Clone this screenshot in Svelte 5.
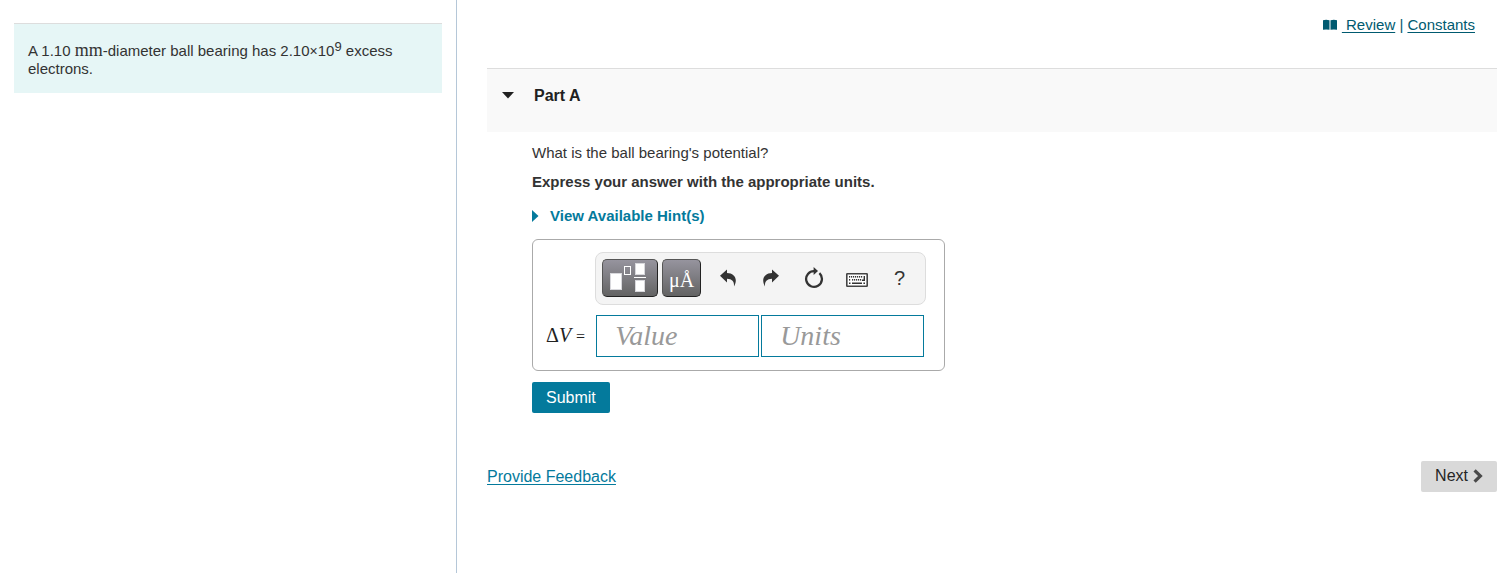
<script lang="ts">
  let hintsOpen = $state(false);
  let value = $state('');
  let units = $state('');
  const keyRows = [
    { y: 4, xs: [3, 5, 7, 9, 11, 13, 15] },
    { y: 7, xs: [3, 6, 8, 10, 12, 14] },
  ];
</script>

<div class="page">
  <aside class="side">
    <p class="problem">
      A 1.10 <span class="unit">mm</span>-diameter ball bearing has 2.10<span class="times">×</span>10<sup>9</sup> excess electrons.
    </p>
  </aside>

  <main class="main">
    <nav class="resources" aria-label="Resources">
      <svg width="16" height="12" viewBox="0 0 16 12" aria-hidden="true">
        <path d="M1 1.2Q4 .2 7.5 1.2V10.8Q4 10 1 10.8ZM8.5 1.2Q12 .2 15 1.2V10.8Q12 10 8.5 10.8Z" fill="#005a70" />
      </svg>
      <span class="links"><a href="#review">&nbsp;Review</a> | <a href="#constants">Constants</a></span>
    </nav>

    <header class="part">
      <button class="toggle" type="button" aria-label="Collapse Part A">
        <svg width="12" height="7" viewBox="0 0 12 7" aria-hidden="true"><path d="M0 0H12L6 6.5Z" fill="#212121" /></svg>
      </button>
      <h1>Part A</h1>
    </header>

    <section class="body">
      <p>What is the ball bearing's potential?</p>
      <p class="strong">Express your answer with the appropriate units.</p>
      <button class="hints" type="button" aria-expanded={hintsOpen} onclick={() => (hintsOpen = !hintsOpen)}>
        <svg width="7" height="12" viewBox="0 0 7 12" aria-hidden="true"><path d="M0 0L6.5 6L0 12Z" fill="#047a9c" /></svg>
        View Available Hint(s)
      </button>

      <div class="editor">
        <div class="toolbar" role="toolbar" aria-label="Equation tools">
          <button class="dark templates" type="button" aria-label="Templates">
            <svg width="36" height="30" viewBox="0 0 36 30" aria-hidden="true">
              <g fill="#fff" stroke="#d8d8dc" stroke-width="1">
                <rect x=".5" y="11.5" width="11" height="16" />
                <rect x="25.5" y="1.5" width="9" height="11" />
                <rect x="25.5" y="18.5" width="9" height="11" />
              </g>
              <rect x="14.5" y="4.5" width="6" height="8" fill="none" stroke="#fff" />
              <path d="M24 15.5H36" stroke="#fff" />
            </svg>
          </button>
          <button class="dark symbols" type="button" aria-label="Symbols">μÅ</button>
          <div class="tools">
            <button class="tool" type="button" aria-label="Undo">
              <svg width="16" height="18" viewBox="0 0 16 18" aria-hidden="true">
                <path d="M0 6.8L7 .4V3.9C12.3 4.1 15.8 6.9 15.8 11.4C15.8 13.6 15.1 15.5 14 17.4C14.4 12.4 12 10 7 9.8V13.4Z" fill="#333" />
              </svg>
            </button>
            <button class="tool" type="button" aria-label="Redo">
              <svg width="16" height="18" viewBox="0 0 16 18" aria-hidden="true">
                <path d="M16 6.8L9 .4V3.9C3.7 4.1.2 6.9.2 11.4C.2 13.6.9 15.5 2 17.4C1.6 12.4 4 10 9 9.8V13.4Z" fill="#333" />
              </svg>
            </button>
            <button class="tool" type="button" aria-label="Reset">
              <svg width="20" height="22" viewBox="0 0 20 22" aria-hidden="true">
                <path d="M15.4 6.2A7.9 7.9 0 1 1 10.5 4.1" fill="none" stroke="#333" stroke-width="2.3" />
                <path d="M9.6 0L14 4L9.6 8Z" fill="#333" />
              </svg>
            </button>
            <button class="tool" type="button" aria-label="Keyboard shortcuts">
              <svg class="keyboard" width="22" height="14" viewBox="0 0 22 14" aria-hidden="true">
                <rect x=".8" y=".8" width="20.4" height="12.4" rx=".5" fill="#fff" stroke="#444" stroke-width="1.6" />
                {#each keyRows as row}
                  {#each row.xs as x}
                    <rect {x} y={row.y - 1} width="1.2" height="1.6" fill="#333" />
                  {/each}
                {/each}
                <path d="M18.3 3V7.2H16M3 10.2H4.5M6 10.2H16M17.4 10.2H19" fill="none" stroke="#333" stroke-width="1.4" />
              </svg>
            </button>
            <button class="tool help" type="button" aria-label="Help">?</button>
          </div>
        </div>

        <label class="quantity" for="value">Δ<i>V</i> <span>=</span></label>
        <div class="fields">
          <input id="value" placeholder="Value" bind:value />
          <input aria-label="Units" placeholder="Units" bind:value={units} />
        </div>
      </div>

      <button class="submit" type="button">Submit</button>
    </section>

    <footer class="foot">
      <a href="#feedback">Provide Feedback</a>
      <button class="next" type="button">
        Next
        <svg width="10" height="14" viewBox="0 0 10 14" aria-hidden="true">
          <path d="M1.6 1.3L7.4 7L1.6 12.7" fill="none" stroke="#4a4a4a" stroke-width="3.2" />
        </svg>
      </button>
    </footer>
  </main>
</div>

<style>
  :global(body) {
    background: #fff;
  }
  .page {
    display: grid;
    grid-template-columns: minmax(0, 457fr) minmax(0, 1050fr);
    min-height: 100vh;
    font: 15px/17px "Liberation Sans", Arial, sans-serif;
    color: #333;
  }
  p,
  h1 {
    margin: 0;
  }
  button {
    font-family: inherit;
    padding: 0;
    border: 0;
    background: none;
    cursor: pointer;
  }
  svg {
    display: block;
  }
  .side {
    padding: 23px 14px;
    border-right: 1px solid #b5c7d8;
  }
  .problem {
    padding: 18px 32px 16px 14px;
    border-top: 1px solid #ddd;
    background: #e6f6f6;
  }
  .unit {
    font-family: "Liberation Serif", "Times New Roman", serif;
    font-size: 18px;
    line-height: 16px;
  }
  .times {
    font-size: 14px;
  }
  sup {
    font-size: 13px;
    line-height: 4px;
    vertical-align: 5px;
  }
  .main {
    padding: 16px 10px 0 30px;
  }
  .resources {
    display: flex;
    justify-content: flex-end;
    align-items: center;
    gap: 4px;
    padding-right: 22px;
    color: #005a70;
  }
  .resources a {
    color: #005a70;
    text-underline-offset: 2px;
  }
  .part {
    display: flex;
    align-items: flex-start;
    gap: 20px;
    margin-top: 35px;
    padding: 17px 15px 27px;
    border-top: 1px solid #ddd;
    background: #f9f9f9;
  }
  .toggle {
    display: flex;
    align-items: center;
    height: 19px;
  }
  h1 {
    font-size: 16px;
    line-height: 19px;
    color: #212121;
  }
  .body {
    display: flex;
    flex-direction: column;
    align-items: flex-start;
    padding: 12px 0 0 45px;
  }
  .strong {
    margin-top: 12px;
    font-weight: bold;
  }
  .hints {
    display: flex;
    align-items: center;
    gap: 11px;
    margin-top: 17px;
    font-size: 15px;
    font-weight: bold;
    line-height: 17px;
    color: #047a9c;
  }
  .editor {
    display: grid;
    grid-template-columns: auto auto;
    gap: 10px;
    align-items: center;
    margin-top: 15px;
    padding: 12px 18px 13px 13px;
    border: 1px solid #aaa;
    border-radius: 6px;
  }
  .toolbar {
    grid-column: 2;
    display: flex;
    align-items: center;
    gap: 4px;
    padding: 6px 6px 7px;
    border: 1px solid #ddd;
    border-radius: 8px;
    background: #f4f4f4;
  }
  .tools {
    display: flex;
    gap: 4px;
    padding-left: 3px;
  }
  .dark {
    display: flex;
    align-items: center;
    justify-content: center;
    height: 38px;
    box-sizing: border-box;
    border: 1px solid #555;
    border-right-color: #222;
    border-bottom-color: #222;
    border-radius: 5px;
    background: linear-gradient(#96949e, #636363);
    color: #fff;
  }
  .templates {
    width: 56px;
    padding: 0 4px 2px 0;
  }
  .symbols {
    width: 39px;
    padding-top: 4px;
    font: 20px/32px "Liberation Serif", "Times New Roman", serif;
  }
  .tool {
    display: flex;
    align-items: center;
    justify-content: center;
    width: 39px;
    height: 38px;
  }
  .keyboard {
    margin-top: 4px;
  }
  .help {
    font-size: 20px;
    color: #333;
  }
  .quantity {
    font: 20px/24px "Liberation Serif", "Times New Roman", serif;
    color: #222;
    white-space: nowrap;
  }
  .quantity span {
    font-size: 16px;
  }
  .fields {
    display: flex;
    gap: 2px;
    padding: 0 1px;
  }
  input {
    box-sizing: border-box;
    width: 163px;
    height: 42px;
    padding: 0 18px;
    border: 1px solid #047a9c;
    background: #fff;
    font: 28px/32px "Liberation Serif", "Times New Roman", serif;
  }
  input::placeholder {
    font-style: italic;
    color: #999;
    opacity: 1;
  }
  .submit {
    margin-top: 11px;
    padding: 6px 14px;
    border-radius: 2px;
    background: #047a9c;
    color: #fff;
    font-size: 16px;
    line-height: 19px;
  }
  .foot {
    display: flex;
    justify-content: space-between;
    align-items: center;
    margin-top: 48px;
    font-size: 16px;
  }
  .foot a {
    color: #047a9c;
    text-underline-offset: 2px;
  }
  .next {
    display: flex;
    align-items: center;
    gap: 5px;
    padding: 5px 14px 7px;
    border-radius: 2px;
    background: #d9d9d9;
    color: #252525;
    font-size: 16px;
    line-height: 19px;
  }
</style>
